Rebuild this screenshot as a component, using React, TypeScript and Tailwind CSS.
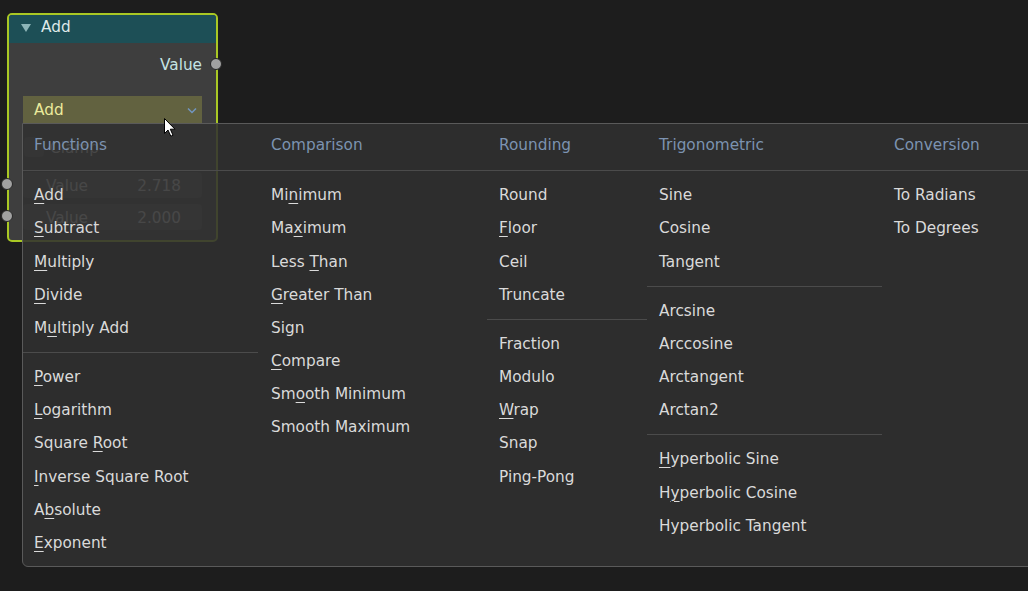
import React from 'react';

type Entry = { t: string; u?: number } | null; // null draws a separator

type Column = {
  title: string;
  width: string;
  pad: string;
  items: Entry[];
};

const columns: Column[] = [
  {
    title: 'Functions',
    width: 'w-[235px]',
    pad: 'pl-[11px]',
    items: [
      { t: 'Add', u: 0 },
      { t: 'Subtract', u: 0 },
      { t: 'Multiply', u: 0 },
      { t: 'Divide', u: 0 },
      { t: 'Multiply Add', u: 1 },
      null,
      { t: 'Power', u: 0 },
      { t: 'Logarithm', u: 0 },
      { t: 'Square Root', u: 7 },
      { t: 'Inverse Square Root', u: 0 },
      { t: 'Absolute', u: 1 },
      { t: 'Exponent', u: 0 },
    ],
  },
  {
    title: 'Comparison',
    width: 'w-[229px]',
    pad: 'pl-[13px]',
    items: [
      { t: 'Minimum', u: 2 },
      { t: 'Maximum', u: 2 },
      { t: 'Less Than', u: 5 },
      { t: 'Greater Than', u: 0 },
      { t: 'Sign' },
      { t: 'Compare', u: 0 },
      { t: 'Smooth Minimum', u: 2 },
      { t: 'Smooth Maximum' },
    ],
  },
  {
    title: 'Rounding',
    width: 'w-[160px]',
    pad: 'pl-[12px]',
    items: [
      { t: 'Round' },
      { t: 'Floor', u: 0 },
      { t: 'Ceil' },
      { t: 'Truncate' },
      null,
      { t: 'Fraction' },
      { t: 'Modulo' },
      { t: 'Wrap', u: 0 },
      { t: 'Snap' },
      { t: 'Ping-Pong' },
    ],
  },
  {
    title: 'Trigonometric',
    width: 'w-[235px]',
    pad: 'pl-[12px]',
    items: [
      { t: 'Sine' },
      { t: 'Cosine' },
      { t: 'Tangent' },
      null,
      { t: 'Arcsine' },
      { t: 'Arccosine' },
      { t: 'Arctangent' },
      { t: 'Arctan2' },
      null,
      { t: 'Hyperbolic Sine', u: 0 },
      { t: 'Hyperbolic Cosine', u: 1 },
      { t: 'Hyperbolic Tangent' },
    ],
  },
  {
    title: 'Conversion',
    width: 'w-[170px]',
    pad: 'pl-[12px]',
    items: [{ t: 'To Radians' }, { t: 'To Degrees' }],
  },
];

function Label({ t, u }: { t: string; u?: number }) {
  if (u === undefined) return <>{t}</>;
  return (
    <>
      {t.slice(0, u)}
      <span className="underline decoration-1 underline-offset-[3px]">{t[u]}</span>
      {t.slice(u + 1)}
    </>
  );
}

function Socket({ pos }: { pos: string }) {
  return (
    <div
      className={`absolute ${pos} w-[12px] h-[12px] rounded-full bg-[#a1a1a1] border border-[#262626]`}
    />
  );
}

function MathNode() {
  return (
    <div className="absolute left-[7px] top-[13px] w-[211px] rounded-[5px] border-2 border-[#a9c824] bg-[#3e3e3e] overflow-hidden flex flex-col pb-[10px]">
      {/* header */}
      <div className="h-[28px] bg-[#1d4f56] flex items-center pl-[12px] gap-[10px] pb-[3px] text-[#dfe9e9]">
        <svg width="10" height="8" viewBox="0 0 10 8">
          <polygon points="0,0 10,0 5,8" fill="#8db5b8" />
        </svg>
        <span>Add</span>
      </div>

      {/* output */}
      <div className="mt-[11px] h-[22px] flex items-center justify-end pr-[14px] text-[#c4e3e3]">
        Value
      </div>

      {/* operation dropdown */}
      <div className="mt-[20px] mx-[14px] h-[27px] bg-[#626240] flex items-center justify-between pl-[11px] pr-[5px] pt-[2px] text-[#ebeb9c]">
        <span>Add</span>
        <svg width="10" height="7" viewBox="0 0 10 7">
          <polyline points="1,1.5 5,5.5 9,1.5" fill="none" stroke="#7296c0" strokeWidth="1.5" />
        </svg>
      </div>

      {/* clamp toggle */}
      <div className="mt-[14px] ml-[15px] h-[20px] flex items-center gap-[6px] text-[#dcdcdc]">
        <div className="w-[20px] h-[20px] rounded-[4px] bg-[#545454]" />
        <span className="pt-[3px]">Clamp</span>
      </div>

      {/* inputs */}
      <div className="mt-[15px] mx-[14px] h-[26px] rounded-[4px] bg-[#545454] flex items-center justify-between pl-[23px] pr-[21px] pt-[2px] text-[#e0e0e0]">
        <span>Value</span>
        <span>2.718</span>
      </div>
      <div className="mt-[6px] mx-[14px] h-[26px] rounded-[4px] bg-[#545454] flex items-center justify-between pl-[23px] pr-[21px] pt-[2px] text-[#e0e0e0]">
        <span>Value</span>
        <span>2.000</span>
      </div>
    </div>
  );
}

function OperationMenu() {
  return (
    <div className="absolute left-[22px] top-[123px] w-[1040px] h-[444px] border border-[#5a5a5a] rounded-b-[6px] bg-[rgba(48,48,48,0.87)] pt-[3px]">
      <div className="flex h-[33px] items-center pt-[4px]">
        {columns.map((c) => (
          <div key={c.title} className={`${c.width} ${c.pad} shrink-0 text-[#7c93b1]`}>
            {c.title}
          </div>
        ))}
      </div>
      <div className="h-[17px] pt-[10px]">
        <div className="h-px bg-[#4b4b4b]" />
      </div>
      <div className="flex">
        {columns.map((c) => (
          <div key={c.title} className={`${c.width} shrink-0 flex flex-col`}>
            {c.items.map((it, i) =>
              it === null ? (
                <div key={i} className="h-[16px] pt-[9px]">
                  <div className="h-px bg-[#4b4b4b]" />
                </div>
              ) : (
                <div key={i} className={`h-[33.2px] flex items-center pt-[4px] ${c.pad} text-[#dadada]`}>
                  <span>
                    <Label t={it.t} u={it.u} />
                  </span>
                </div>
              )
            )}
          </div>
        ))}
      </div>
    </div>
  );
}

function Pointer() {
  return (
    <svg
      className="absolute left-[163px] top-[117px]"
      width="14"
      height="21"
      viewBox="0 0 14 21"
    >
      <path
        d="M1.5 1.5 L1.5 16.5 L5 13 L7.8 19.2 L10 18.2 L7.3 12.2 L12 12.2 Z"
        fill="#ffffff"
        stroke="#000000"
        strokeWidth="1"
        strokeLinejoin="miter"
      />
    </svg>
  );
}

export default function App() {
  return (
    <div className="relative w-[1028px] h-[591px] overflow-hidden bg-[#1d1d1d] font-['DejaVu_Sans',sans-serif] text-[15.3px]">
      <MathNode />
      <Socket pos="left-[210px] top-[58px]" />
      <Socket pos="left-[1px] top-[178px]" />
      <Socket pos="left-[1px] top-[210px]" />
      <OperationMenu />
      <Pointer />
    </div>
  );
}
